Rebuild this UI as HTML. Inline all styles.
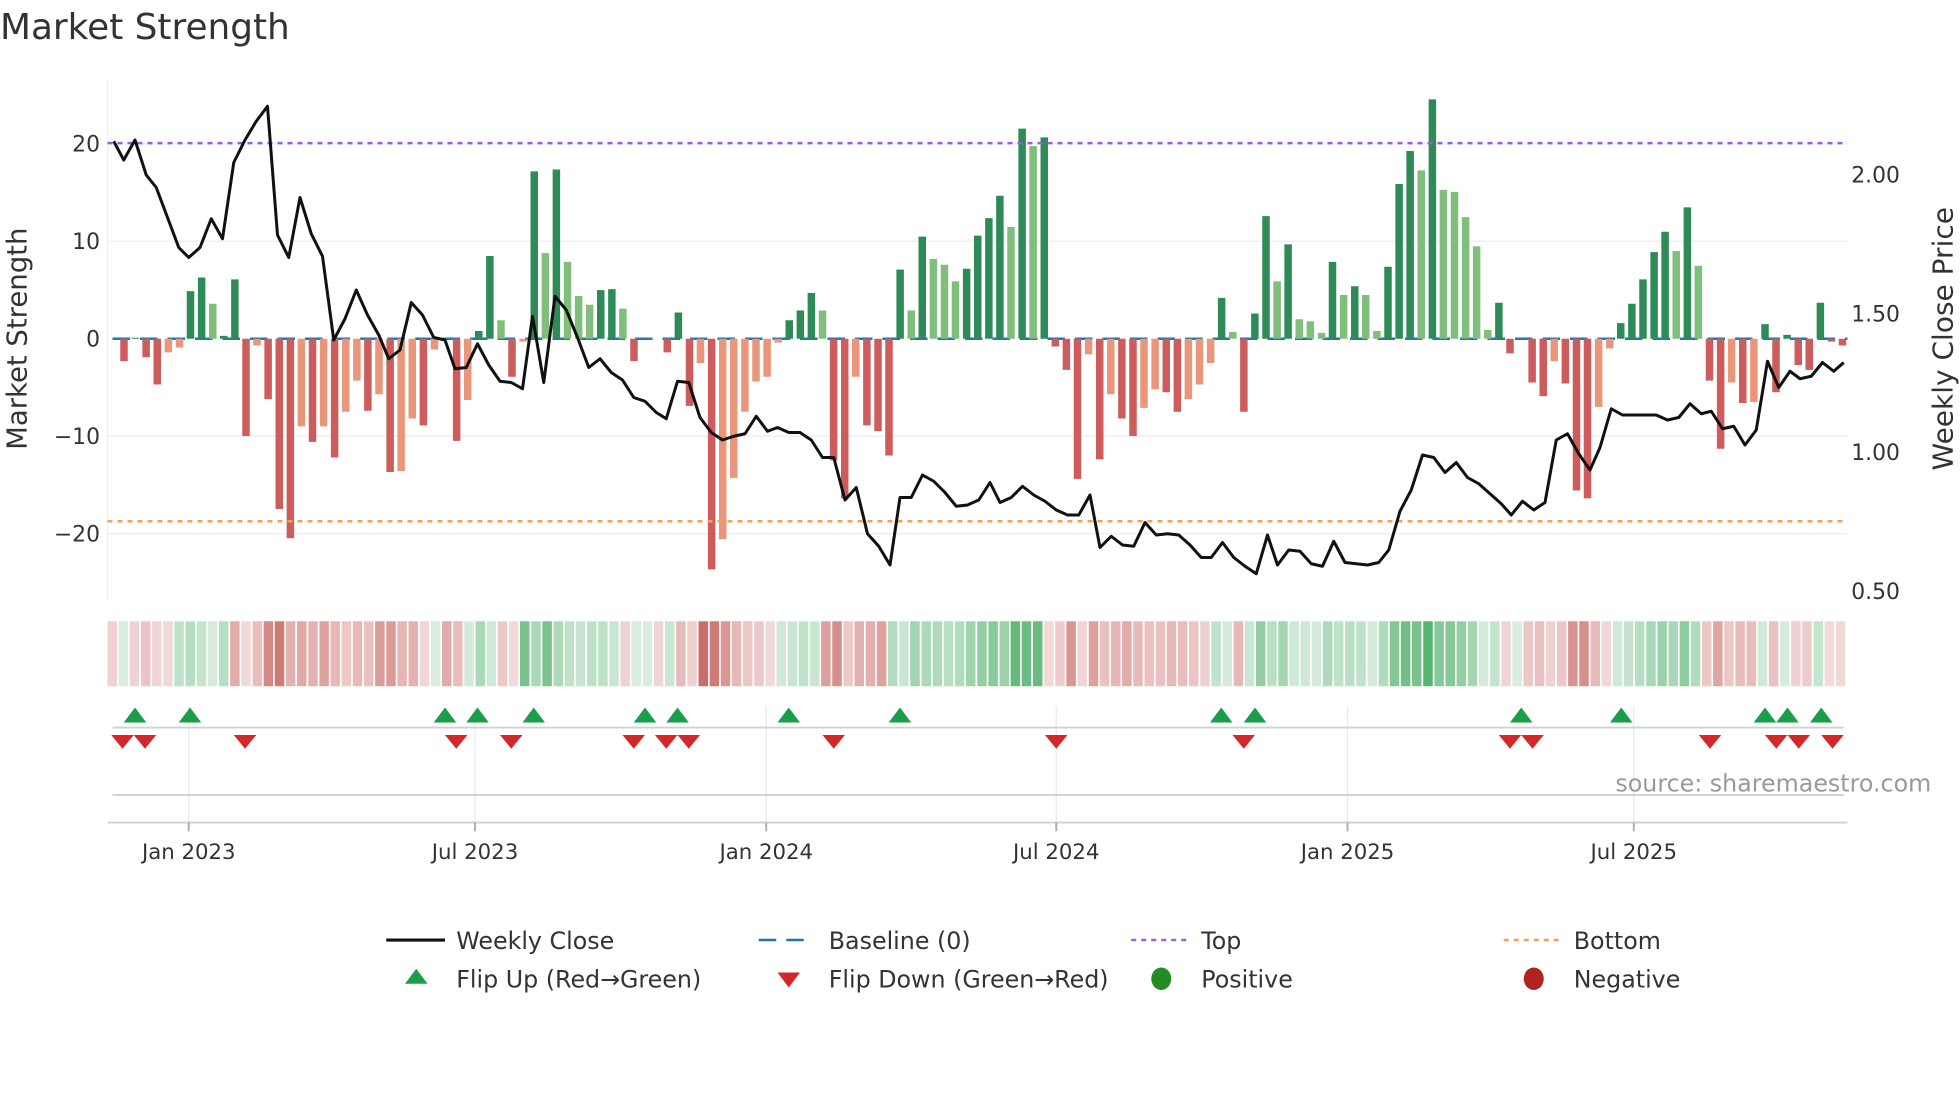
<!DOCTYPE html>
<html><head><meta charset="utf-8"><style>
html,body{margin:0;padding:0;background:#fff;width:1960px;height:1102px;overflow:hidden}
svg{display:block}
text{font-family:"DejaVu Sans","Liberation Sans",sans-serif;fill:#333}
</style></head><body>
<svg id="s" width="1960" height="1102" viewBox="0 0 1568 881.6" xmlns="http://www.w3.org/2000/svg">
<text x="0" y="31" font-size="28.7">Market Strength</text>
<line x1="86" y1="64" x2="86" y2="480" stroke="#eef0f4" stroke-width="1"/>
<g stroke="#eceef3" stroke-width="1">
<line x1="86" y1="115" x2="1478" y2="115"/><line x1="86" y1="193" x2="1478" y2="193"/>
<line x1="86" y1="349" x2="1478" y2="349"/><line x1="86" y1="427" x2="1478" y2="427"/>
</g>
<g font-size="17.5" text-anchor="end">
<text x="80" y="121">20</text><text x="80" y="199">10</text><text x="80" y="277">0</text>
<text x="80" y="355">−10</text><text x="80" y="433">−20</text>
</g>
<g font-size="17.5">
<text x="1481" y="146">2.00</text><text x="1481" y="257">1.50</text><text x="1481" y="368">1.00</text><text x="1481" y="479">0.50</text>
</g>
<text transform="translate(21,271) rotate(-90)" font-size="22" text-anchor="middle">Market Strength</text>
<text transform="translate(1562,271) rotate(-90)" font-size="22.4" text-anchor="middle">Weekly Close Price</text>
<line x1="90" y1="271" x2="1478" y2="271" stroke="#1f77b4" stroke-width="2" stroke-dasharray="14,8"/>
<g id="bars"></g>
<line x1="86" y1="114.5" x2="1478" y2="114.5" stroke="#9c5de0" stroke-width="2" stroke-dasharray="4,4"/>
<line x1="86" y1="417" x2="1478" y2="417" stroke="#f0a060" stroke-width="2" stroke-dasharray="4,4"/>
<polyline id="price" fill="none" stroke="#111" stroke-width="2.4" stroke-linejoin="round"/>
<g id="heat"></g>
<g stroke="#e8eaf0" stroke-width="1">
<line x1="151" y1="565" x2="151" y2="658"/><line x1="380" y1="565" x2="380" y2="658"/>
<line x1="613" y1="565" x2="613" y2="658"/><line x1="845" y1="565" x2="845" y2="658"/>
<line x1="1078" y1="565" x2="1078" y2="658"/><line x1="1307" y1="565" x2="1307" y2="658"/>
</g>
<line x1="90" y1="582" x2="1475" y2="582" stroke="#cfd1d6" stroke-width="1.5"/>
<line x1="90" y1="636" x2="1475" y2="636" stroke="#cfd1d6" stroke-width="1.5"/>
<line x1="86" y1="658" x2="1478" y2="658" stroke="#cfd1d6" stroke-width="1.5"/>
<g stroke="#aaa" stroke-width="1.5">
<line x1="151" y1="658" x2="151" y2="665"/><line x1="380" y1="658" x2="380" y2="665"/>
<line x1="613" y1="658" x2="613" y2="665"/><line x1="845" y1="658" x2="845" y2="665"/>
<line x1="1078" y1="658" x2="1078" y2="665"/><line x1="1307" y1="658" x2="1307" y2="665"/>
</g>
<g id="marks"></g>
<g font-size="17" text-anchor="middle">
<text x="151" y="687">Jan 2023</text><text x="380" y="687">Jul 2023</text><text x="613" y="687">Jan 2024</text>
<text x="845" y="687">Jul 2024</text><text x="1078" y="687">Jan 2025</text><text x="1307" y="687">Jul 2025</text>
</g>
<text x="1545" y="633" font-size="19" text-anchor="end" style="fill:#999">source: sharemaestro.com</text>
<g font-size="19">
<line x1="309" y1="752" x2="356" y2="752" stroke="#111" stroke-width="2.5"/>
<text x="365" y="759">Weekly Close</text>
<line x1="607" y1="752" x2="651" y2="752" stroke="#1f77b4" stroke-width="2" stroke-dasharray="14,8"/>
<text x="663" y="759">Baseline (0)</text>
<line x1="905" y1="752" x2="949" y2="752" stroke="#9c5de0" stroke-width="2" stroke-dasharray="4,4"/>
<text x="961" y="759">Top</text>
<line x1="1203" y1="752" x2="1247" y2="752" stroke="#f0a060" stroke-width="2" stroke-dasharray="4,4"/>
<text x="1259" y="759">Bottom</text>
<polygon points="324,787 342,787 333,775" fill="#1a9e48"/>
<text x="365" y="790">Flip Up (Red→Green)</text>
<polygon points="622,778 640,778 631,790" fill="#d62728"/>
<text x="663" y="790">Flip Down (Green→Red)</text>
<ellipse cx="929" cy="783" rx="8" ry="9" fill="#228b22"/>
<text x="961" y="790">Positive</text>
<ellipse cx="1227" cy="783" rx="8" ry="9" fill="#b22222"/>
<text x="1259" y="790">Negative</text>
</g>
</svg>
<script>
var V=[-2.3,0.1,-1.9,-4.7,-1.4,-0.9,4.9,6.3,3.6,0.3,6.1,-10,-0.7,-6.2,-17.5,-20.5,-9,-10.6,-9,-12.2,-7.5,-4.3,-7.4,-5.7,-13.7,-13.6,-8.2,-8.9,-1.1,0,-10.5,-6.3,0.8,8.5,1.9,-3.9,-0.3,17.2,8.8,17.4,
7.9,4.4,3.5,5.0,5.1,3.1,-2.3,0,0,-1.4,2.7,-6.9,-2.5,-23.7,-20.6,-14.3,-7.5,-4.4,-3.9,-0.4,1.9,2.9,4.7,2.9,-12.5,-16.4,-3.9,-8.9,-9.5,-12.0,7.1,2.9,10.5,8.2,7.6,5.9,7.2,10.6,12.4,14.7,11.5,21.6,19.8,
20.7,-0.8,-3.2,-14.4,-1.6,-12.4,-5.7,-8.2,-10.0,-7.1,-5.2,-5.5,-7.5,-6.2,-4.7,-2.5,4.2,0.7,-7.5,2.6,12.6,5.9,9.7,2.0,1.8,0.6,7.9,4.5,5.4,4.5,0.8,7.4,15.9,19.3,17.3,24.6,15.3,15.1,12.5,9.5,0.9,3.7,
-1.5,0,-4.5,-5.9,-2.3,-4.6,-15.6,-16.4,-7.0,-1.0,1.6,3.6,6.1,8.9,11.0,9.0,13.5,7.5,-4.3,-11.3,-4.5,-6.6,-6.5,1.5,-5.5,0.4,-2.7,-3.2,3.7,-0.3,-0.7];
var T="RDRRSSDDLDDRSRRRSRSRSSRSRSSRSXRSDDLRSDLD"+
"LLLDDLRXXRDRSRSSSSSSDDDLRRSRRRDLDLLLDDDDLDL"+
"DRRRSRSRRSSRRSSSDLRDDLDLLLDLDLLDDDLDLLLLLD"+
"RXRRSRRRSSDDDDDLDLRRSRSDRDRRDRR";
var col={D:"#2e8b57",L:"#7fbf7b",R:"#cd5c5c",S:"#e9967a",X:"#ccc"};
var ns="http://www.w3.org/2000/svg";
function el(n,a,p){var e=document.createElementNS(ns,n);for(var k in a)e.setAttribute(k,a[k]);document.getElementById(p).appendChild(e);}
for(var i=0;i<V.length;i++){
 var x=99.2+8.87*i,v=V[i],y0=271,h=v*7.784;
 var t=T[i]||(v>=0?"D":"R");
 if(v>0&&(t=="R"||t=="S"))t="D"; if(v<0&&(t=="D"||t=="L"))t="R";
 if(v!=0) el("rect",{x:(x-3).toFixed(1),y:(h>0?y0-h:y0).toFixed(1),width:6,height:Math.abs(h).toFixed(1),fill:col[t]},"bars");
 var a=0.2+0.65*Math.min(Math.abs(v)/24,1);
 el("rect",{x:(86+8.92*i).toFixed(1),y:497,width:7.6,height:52,fill:v>=0?"#3aa657":"#c0504a","fill-opacity":a.toFixed(2)},"heat");
}
var P=[91,113,99,128,108,112,117,140,125,150,134,174,143,198,151,206,160,198,169,175,178,191,187,130,196,112,205,97,214,85,222,188,231,206,240,158,249,187,258,205,267,272,276,255,285,232,294,252,303,268,311,287,320,280,329,242,338,252,347,270,356,272,364,295,373,294,382,275,391,292,400,305,409,306,418,311,426,253,435,306,444,237,453,248,462,270,471,294,480,287,489,298,498,304,507,318,516,321,525,330,533,335,542,305,551,306,560,334,569,346,578,352,587,349,596,347,605,333,614,345,622,342,631,346,640,346,649,352,658,366,667,366,676,400,685,390,694,427,703,437,712,452,720,398,729,398,738,380,747,385,756,394,765,405,774,404,783,400,792,386,800,402,809,398,818,389,827,396,836,401,845,408,854,412,863,412,872,396,880,438,889,429,898,436,907,437,916,418,925,428,934,427,943,428,952,436,961,446,969,446,978,434,987,446,996,453,1005,459,1014,428,1022,452,1031,440,1040,441,1049,451,1058,453,1067,433,1076,450,1085,451,1094,452,1103,450,1111,440,1120,409,1129,392,1138,364,1147,366,1156,378,1165,370,1174,382,1183,387,1192,395,1201,403,1209,412,1218,401,1227,408,1236,402,1245,352,1254,347,1263,363,1272,376,1280,358,1289,327,1298,332,1307,332,1316,332,1325,332,1334,336,1343,334,1352,323,1361,331,1369,329,1378,343,1387,341,1396,356,1405,344,1414,289,1423,310,1432,297,1440,303,1449,301,1458,290,1467,297,1475,290];
var s="";for(var j=0;j<P.length;j+=2)s+=P[j]+","+P[j+1]+" ";
document.getElementById("price").setAttribute("points",s);
var up=[108,152,356,382,427,516,542,631,720,977,1004,1217,1297,1412,1430,1457];
var dn=[98,116,196,365,409,507,533,551,667,845,995,1208,1226,1368,1421,1439,1466];
up.forEach(function(x){el("polygon",{points:(x-9)+",578 "+(x+9)+",578 "+x+",566",fill:"#1a9e48"},"marks");});
dn.forEach(function(x){el("polygon",{points:(x-9)+",588 "+(x+9)+",588 "+x+",599",fill:"#d62728"},"marks");});
</script>
</body></html>
